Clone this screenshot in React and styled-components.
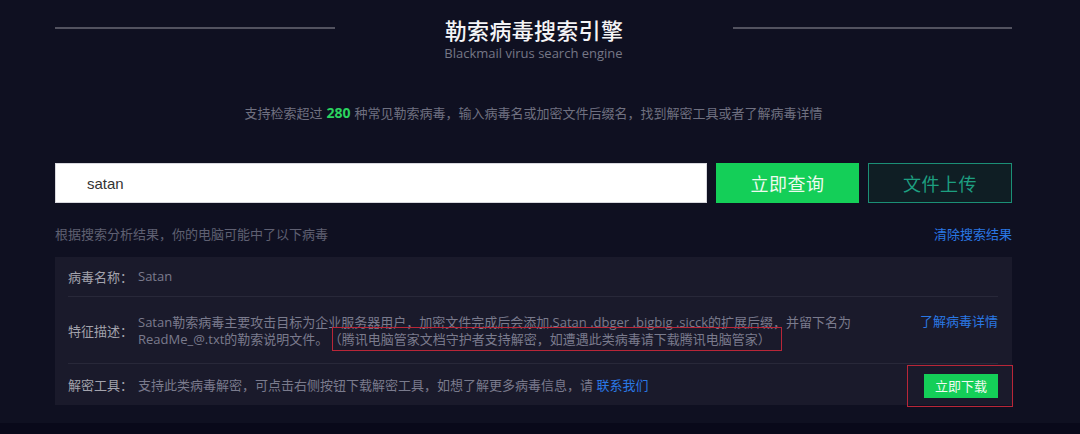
import React from "react";
import styled, { createGlobalStyle } from "styled-components";

const GlobalStyle = createGlobalStyle`
  html, body {
    margin: 0;
    padding: 0;
    background: #0f1021;
  }
  body {
    font-family: "Open Sans", "Noto Sans CJK SC", sans-serif;
  }
`;

const Page = styled.div`
  height: 423px;
  background: #0f1021;
  overflow: hidden;
`;

const Footer = styled.div`
  height: 11px;
  background: #09091a;
`;

const Container = styled.div`
  width: 957px;
  margin-left: 55px;
  padding-top: 14px;
`;

const TitleRow = styled.div`
  display: grid;
  grid-template-columns: 280px 1fr 279px;
  align-items: center;
`;

const Rule = styled.div`
  height: 2px;
  background: #52525f;
  margin-top: -3px;
`;

const Title = styled.h1`
  margin: 0;
  text-align: center;
  font-size: 22px;
  line-height: 30px;
  font-weight: 500;
  color: #f4f4f6;
  font-family: "Noto Sans CJK SC", sans-serif;
  letter-spacing: 0.3px;
`;

const Subtitle = styled.div`
  text-align: center;
  font-size: 13px;
  line-height: 18px;
  color: #767786;
`;

const Tagline = styled.p`
  margin: 41px 0 0;
  text-align: center;
  font-size: 13px;
  line-height: 20px;
  color: #6f7080;
  font-family: "Noto Sans CJK SC", sans-serif;
`;

const Count = styled.b`
  color: #2bd35f;
  font-weight: 700;
  font-size: 14px;
  font-family: "Open Sans", sans-serif;
  margin: 0 4px;
`;

const SearchRow = styled.form`
  display: flex;
  gap: 9px;
  margin-top: 40px;
  height: 40px;
`;

const SearchInput = styled.input`
  width: 652px;
  box-sizing: border-box;
  height: 40px;
  border: 1px solid #d8d8de;
  background: #fff;
  padding: 0 0 0 31px;
  font-family: "Liberation Sans", Arial, sans-serif;
  font-size: 15px;
  color: #333;
  outline: none;
`;

const Button = styled.button`
  width: ${(p) => p.$w || 143}px;
  height: 40px;
  box-sizing: border-box;
  border: 1px solid ${(p) => (p.$outline ? "#1b8f76" : "#14cf58")};
  background: ${(p) => (p.$outline ? "#0f1e24" : "#14cf58")};
  color: ${(p) => (p.$outline ? "#1d9f80" : "#eefaf0")};
  font-family: "Noto Sans CJK SC", sans-serif;
  font-size: 18px;
  letter-spacing: 0.5px;
  cursor: pointer;
  padding: 0;
`;

const ResultBar = styled.div`
  display: flex;
  justify-content: space-between;
  align-items: center;
  margin-top: 21px;
  line-height: 20px;
  font-size: 13px;
  font-family: "Noto Sans CJK SC", sans-serif;
  color: #5f6072;
`;

const Link = styled.a`
  color: #2a78e4;
  text-decoration: none;
  cursor: pointer;
  font-family: "Noto Sans CJK SC", sans-serif;
`;

const Panel = styled.div`
  margin-top: 13px;
  background: #1a1a2b;
  padding: 0 14px 0 13px;
  font-size: 13px;
  font-family: "Open Sans", "Noto Sans CJK SC", sans-serif;
`;

const Row = styled.div`
  display: flex;
  align-items: center;
  min-height: ${(p) => p.$h}px;
  box-sizing: border-box;
  border-bottom: ${(p) => (p.$last ? "none" : "1px solid #282839")};
`;

const Label = styled.span`
  width: 70px;
  flex-shrink: 0;
  color: #a3a3ad;
  font-family: "Noto Sans CJK SC", sans-serif;
  line-height: 17px;
`;

const Value = styled.div`
  flex: 1;
  color: #7a7b8d;
  line-height: 17px;
  white-space: nowrap;
`;

const Desc = styled(Value)`
  padding: 16px 0 14px;
`;

const Marked = styled.span`
  border: 1.5px solid #b82638;
  padding: 2px 10px 2px 2px;
  margin-left: 4px;
`;

const SideLink = styled(Link)`
  align-self: flex-start;
  margin-top: 15px;
  line-height: 17px;
`;

const Marker = styled.div`
  border: 1.5px solid #b82638;
  padding: 8px 14px 8px 16px;
  margin: 0 -15px -2px 0;
`;

const Download = styled.button`
  width: 74px;
  height: 24px;
  border: none;
  background: #14cf58;
  color: #effaf1;
  font-family: "Noto Sans CJK SC", sans-serif;
  font-size: 13px;
  padding: 0;
  cursor: pointer;
  display: block;
`;

export default function App() {
  return (
    <>
      <GlobalStyle />
      <Page>
        <Container>
          <TitleRow>
            <Rule />
            <Title>勒索病毒搜索引擎</Title>
            <Rule />
          </TitleRow>
          <Subtitle>Blackmail virus search engine</Subtitle>
          <Tagline>
            支持检索超过<Count>280</Count>种常见勒索病毒，输入病毒名或加密文件后缀名，找到解密工具或者了解病毒详情
          </Tagline>
          <SearchRow onSubmit={(e) => e.preventDefault()}>
            <SearchInput defaultValue="satan" />
            <Button type="submit">立即查询</Button>
            <Button type="button" $outline $w={144}>
              文件上传
            </Button>
          </SearchRow>
          <ResultBar>
            <span>根据搜索分析结果，你的电脑可能中了以下病毒</span>
            <Link>清除搜索结果</Link>
          </ResultBar>
          <Panel>
            <Row $h={40}>
              <Label>病毒名称：</Label>
              <Value>Satan</Value>
            </Row>
            <Row $h={67}>
              <Label>特征描述：</Label>
              <Desc>
                Satan勒索病毒主要攻击目标为企业服务器用户，加密文件完成后会添加.Satan .dbger .bigbig .sicck的扩展后缀，并留下名为
                <br />
                ReadMe_@.txt的勒索说明文件。
                <Marked>（腾讯电脑管家文档守护者支持解密，如遭遇此类病毒请下载腾讯电脑管家）</Marked>
              </Desc>
              <SideLink>了解病毒详情</SideLink>
            </Row>
            <Row $h={41} $last>
              <Label>解密工具：</Label>
              <Value>
                支持此类病毒解密，可点击右侧按钮下载解密工具，如想了解更多病毒信息，请 <Link>联系我们</Link>
              </Value>
              <Marker>
                <Download type="button">立即下载</Download>
              </Marker>
            </Row>
          </Panel>
        </Container>
      </Page>
      <Footer />
    </>
  );
}
